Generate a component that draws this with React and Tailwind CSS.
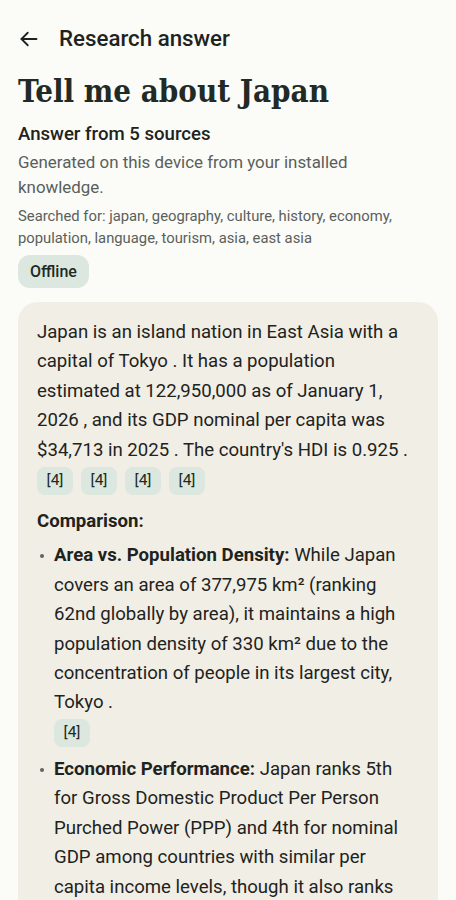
import React from "react";

const Cite = ({ n }) => (
  <span className="inline-flex h-[28px] w-[36px] items-center justify-center rounded-[8px] bg-[#dce7df] text-[15.5px] text-[#1d2b24]">
    [{n}]
  </span>
);

const Bullet = ({ title, children, cites }) => (
  <li className="flex">
    <span className="mt-[13px] ml-[3px] mr-[10px] h-[4px] w-[4px] shrink-0 rounded-full bg-[#5d645f]" />
    <div className="flex-1">
      <p className="text-[18.6px] leading-[29.4px] text-[#1e2320]">
        <span className="font-bold">{title}</span> {children}
      </p>
      {cites && (
        <div className="mt-[1px] flex gap-[8px]">
          {cites.map((c, i) => (
            <Cite key={i} n={c} />
          ))}
        </div>
      )}
    </div>
  </li>
);

export default function App() {
  return (
    <div
      className="min-h-screen w-full bg-[#fbfbf8] text-[#1e2320]"
      style={{ fontFamily: "Roboto, 'Noto Sans', sans-serif" }}
    >
      <div className="flex h-[77px] items-center gap-[20px] px-[19px]">
        <svg width="20" height="20" viewBox="0 0 24 24" fill="none" stroke="#1e2320" strokeWidth="2.2" strokeLinecap="round" strokeLinejoin="round">
          <path d="M21 12H3" />
          <path d="M10.5 4.5L3 12l7.5 7.5" />
        </svg>
        <h1 className="text-[22.3px] font-medium text-[#1e2320]">Research answer</h1>
      </div>

      <div className="px-[18px]">
        <h2
          className="text-[31px] font-bold leading-[28px] text-[#222a25]"
          style={{ fontFamily: "'DejaVu Serif', 'Liberation Serif', serif", fontStretch: "condensed" }}
        >
          Tell me about Japan
        </h2>
        <p className="mt-[17px] text-[18.6px] font-medium leading-[24px]">Answer from 5 sources</p>
        <p className="mt-[4px] max-w-[400px] text-[16.9px] leading-[25px] text-[#5a5f5c]">
          Generated on this device from your installed knowledge.
        </p>
        <p className="mt-[5px] text-[14.8px] leading-[22px] text-[#5a5f5c]">
          Searched for: japan, geography, culture, history, economy, population, language, tourism, asia, east asia
        </p>
        <span className="mt-[6px] inline-flex h-[33px] items-center rounded-[12px] bg-[#dce7df] px-[12px] text-[16px] font-medium text-[#1d2b24]">
          Offline
        </span>

        <div className="mt-[14px] rounded-[20px] bg-[#f1eee6] px-[19px] pb-[24px] pt-[16px]">
          <p className="text-[18.6px] leading-[29.4px]">
            Japan is an island nation in East Asia with a capital of Tokyo . It has a population estimated at 122,950,000 as of January 1, 2026 , and its GDP nominal per capita was $34,713 in 2025 . The country's HDI is 0.925 .
          </p>
          <div className="mt-[2px] flex gap-[8px]">
            <Cite n={4} />
            <Cite n={4} />
            <Cite n={4} />
            <Cite n={4} />
          </div>
          <p className="mt-[12px] text-[18.6px] font-bold leading-[29.4px]">Comparison:</p>
          <ul className="mt-[5px] flex flex-col gap-[8px]">
            <Bullet title="Area vs. Population Density:" cites={[4]}>
              While Japan covers an area of 377,975 km² (ranking 62nd globally by area), it maintains a high population density of 330 km² due to the concentration of people in its largest city, Tokyo .
            </Bullet>
            <Bullet title="Economic Performance:">
              Japan ranks 5th for Gross Domestic Product Per Person Purched Power (PPP) and 4th for nominal GDP among countries with similar per capita income levels, though it also ranks 2nd in Asia for economic complexity.
            </Bullet>
          </ul>
        </div>
      </div>
    </div>
  );
}
